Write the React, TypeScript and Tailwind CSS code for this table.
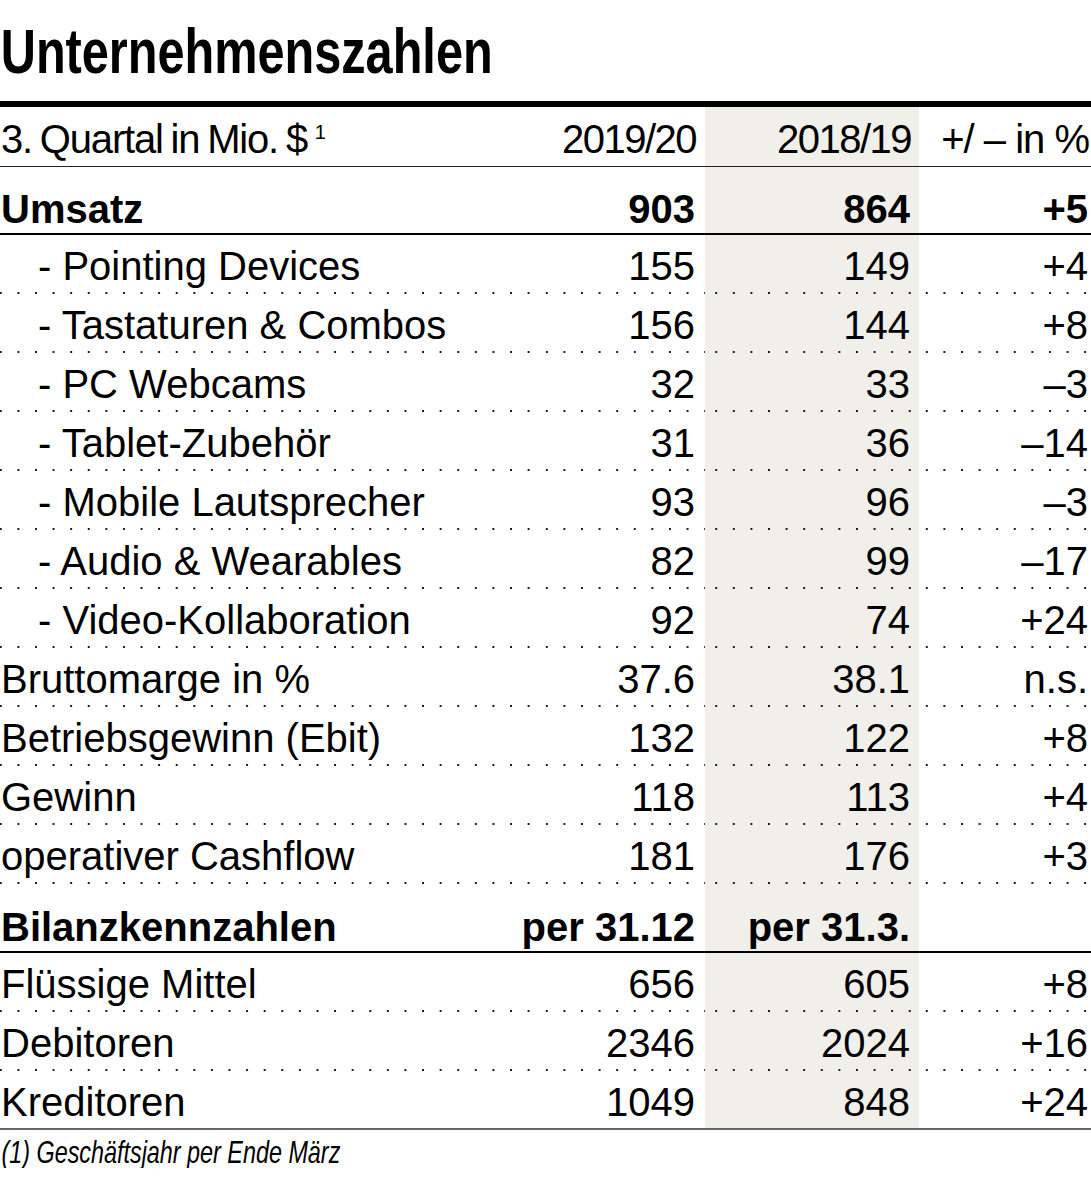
type Row = {
  label: string;
  a: string;
  b: string;
  c: string;
  sub?: boolean;
  last?: boolean;
};

const umsatzRows: Row[] = [
  { label: '- Pointing Devices', a: '155', b: '149', c: '+4', sub: true },
  { label: '- Tastaturen & Combos', a: '156', b: '144', c: '+8', sub: true },
  { label: '- PC Webcams', a: '32', b: '33', c: '–3', sub: true },
  { label: '- Tablet-Zubehör', a: '31', b: '36', c: '–14', sub: true },
  { label: '- Mobile Lautsprecher', a: '93', b: '96', c: '–3', sub: true },
  { label: '- Audio & Wearables', a: '82', b: '99', c: '–17', sub: true },
  { label: '- Video-Kollaboration', a: '92', b: '74', c: '+24', sub: true },
  { label: 'Bruttomarge in %', a: '37.6', b: '38.1', c: 'n.s.' },
  { label: 'Betriebsgewinn (Ebit)', a: '132', b: '122', c: '+8' },
  { label: 'Gewinn', a: '118', b: '113', c: '+4' },
  { label: 'operativer Cashflow', a: '181', b: '176', c: '+3' },
];

const bilanzRows: Row[] = [
  { label: 'Flüssige Mittel', a: '656', b: '605', c: '+8' },
  { label: 'Debitoren', a: '2346', b: '2024', c: '+16' },
  { label: 'Kreditoren', a: '1049', b: '848', c: '+24', last: true },
];

// dotted separator painted at the bottom of each cell, so the dots restart per column
const dots =
  'bg-[linear-gradient(to_right,#1c1c1c_2px,transparent_2px)] bg-[length:17.6px_2px] bg-bottom bg-repeat-x';
const shade = 'bg-[#f0efea]';

function DataRow({ row }: { row: Row }) {
  const base = row.last
    ? 'h-[59px] pt-[6px] leading-[51px] border-b-2 border-[#666]'
    : `h-[59px] pt-[6px] leading-[51px] ${dots}`;
  return (
    <>
      <div className={`${base} whitespace-nowrap ${row.sub ? 'pl-[38px]' : 'pl-[1px]'}`}>{row.label}</div>
      <div className={`${base} pr-[10px] text-right`}>{row.a}</div>
      <div className={`${base} ${shade} pr-[9px] text-right`}>{row.b}</div>
      <div className={`${base} pr-[3px] text-right`}>{row.c}</div>
    </>
  );
}

export default function App() {
  const boldRow = 'h-[68px] pt-[19px] leading-[47px] border-b-2 border-black font-bold';
  const headRow = 'h-[60px] pt-[6px] leading-[53px] border-b border-[#222]';
  const bilRow = 'h-[69px] pt-[19px] leading-[48px] border-b-2 border-black font-bold';

  return (
    <div className="w-[1091px] bg-white text-black font-['Liberation_Sans',Arial,sans-serif] text-[40px]">
      {/* Title */}
      <div className="h-[101px] pt-[20px]">
        <h1 className="origin-left scale-x-[0.772] pl-[1px] text-[63px] leading-[63px] font-bold whitespace-nowrap">
          Unternehmenszahlen
        </h1>
      </div>
      <div className="h-[6px] bg-black" />

      <div className="grid grid-cols-[545px_160px_214px_172px]">
        {/* Header */}
        <div className={`${headRow} pl-[1px] whitespace-nowrap tracking-[-1.2px] [word-spacing:-2px]`}>
          3. Quartal in Mio. ${' '}
          <span className="relative -top-[14px] text-[20px] leading-none">1</span>
        </div>
        <div className={`${headRow} pr-[9px] text-right tracking-[-1.5px]`}>2019/20</div>
        <div className={`${headRow} ${shade} pr-[8px] text-right tracking-[-1.5px]`}>2018/19</div>
        <div className={`${headRow} pr-[2px] text-right whitespace-nowrap tracking-[-1px]`}>+/ – in %</div>

        {/* Umsatz */}
        <div className={`${boldRow} pl-[1px]`}>Umsatz</div>
        <div className={`${boldRow} pr-[10px] text-right`}>903</div>
        <div className={`${boldRow} ${shade} pr-[9px] text-right`}>864</div>
        <div className={`${boldRow} pr-[3px] text-right`}>+5</div>

        {umsatzRows.map((r) => (
          <DataRow key={r.label} row={r} />
        ))}

        {/* Bilanz */}
        <div className={`${bilRow} pl-[1px]`}>Bilanzkennzahlen</div>
        <div className={`${bilRow} flex justify-end pr-[10px] whitespace-nowrap`}>per 31.12</div>
        <div className={`${bilRow} ${shade} flex justify-end pr-[9px] whitespace-nowrap`}>per 31.3.</div>
        <div className="h-[69px] border-b-2 border-black" />

        {bilanzRows.map((r) => (
          <DataRow key={r.label} row={r} />
        ))}
      </div>

      {/* Footnote */}
      <p className="origin-left scale-x-[0.73] pt-[6px] pl-[2px] italic text-[32px] leading-[32px] whitespace-nowrap">
        (1) Geschäftsjahr per Ende März
      </p>
    </div>
  );
}
